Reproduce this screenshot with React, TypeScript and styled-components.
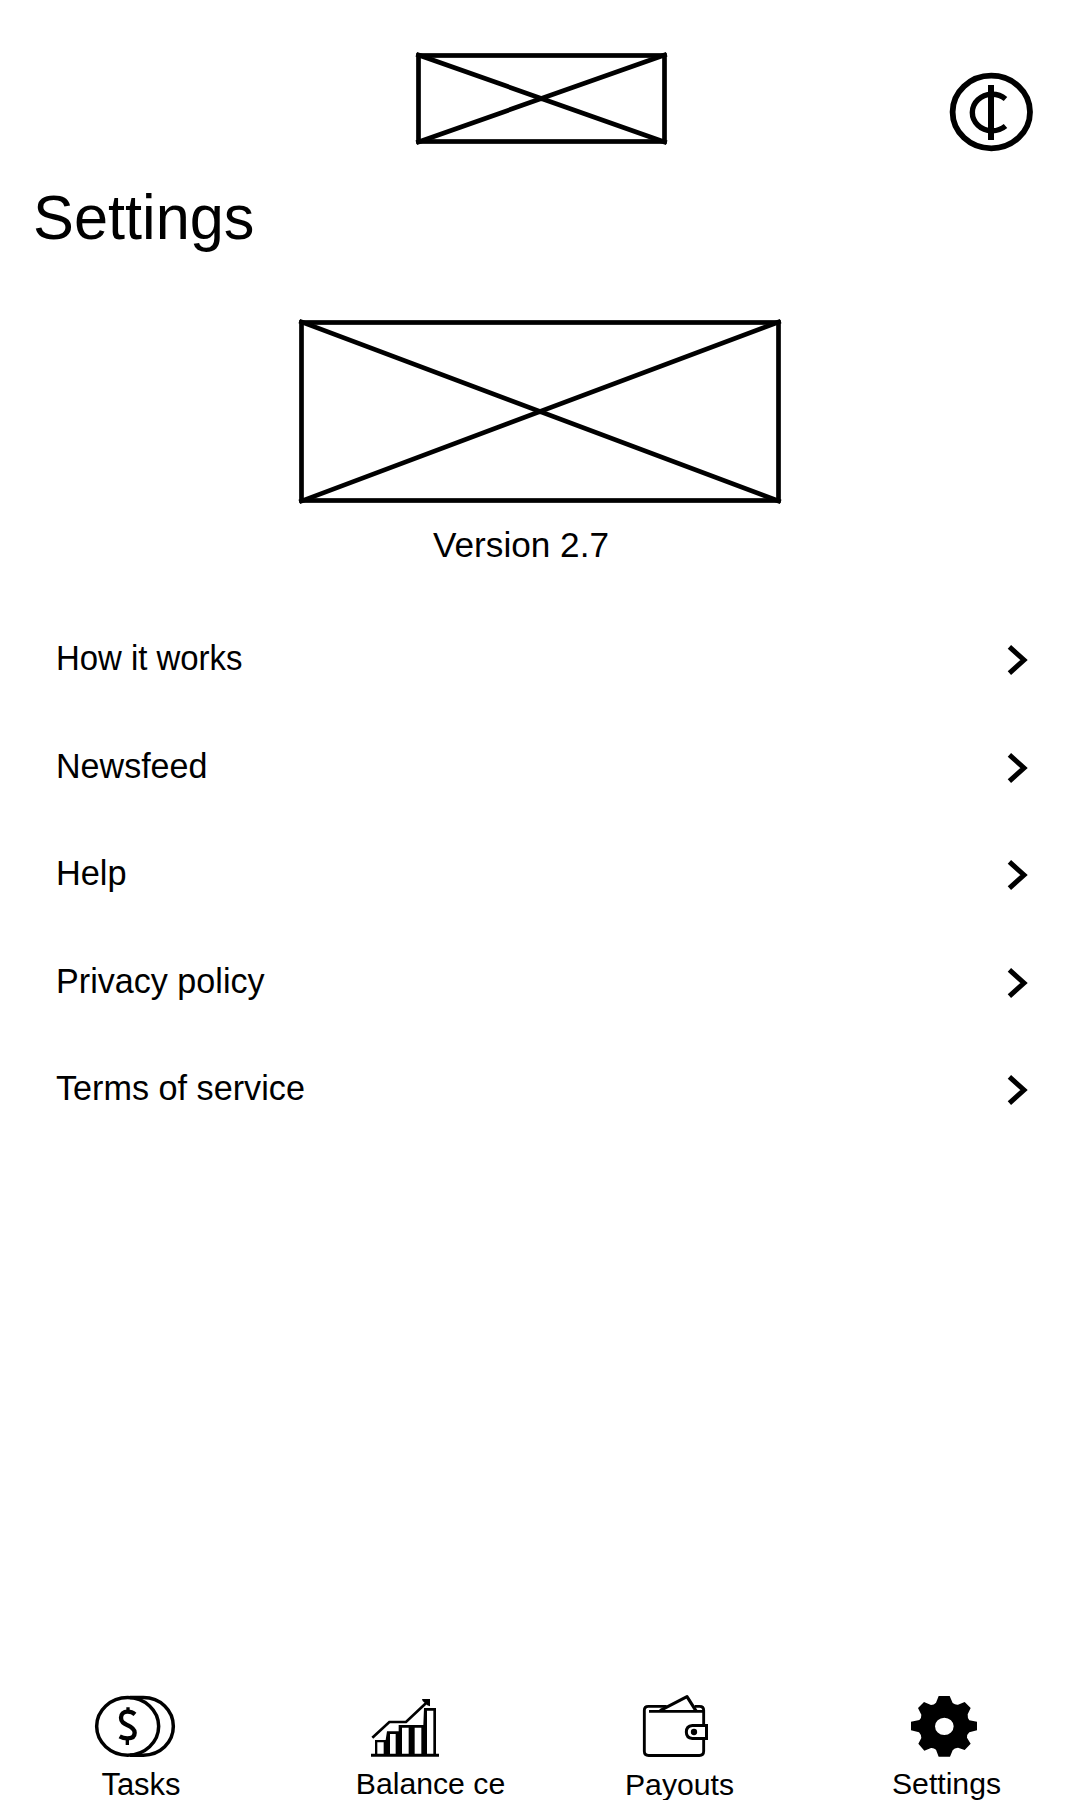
import React from "react";
import styled, { createGlobalStyle } from "styled-components";

const Global = createGlobalStyle`
  html, body { margin: 0; padding: 0; background: #fff; }
  * { box-sizing: border-box; }
`;

const Screen = styled.div`
  display: flex;
  flex-direction: column;
  width: 1080px;
  height: 1800px;
  overflow: hidden;
  background: #fff;
  color: #000;
  font-family: "Liberation Sans", Arial, sans-serif;
`;

const Header = styled.header`
  display: grid;
  grid-template-columns: 1fr 256px 1fr;
  height: 180px;
  padding: 50px 46px 0 48px;
`;

const CoinButton = styled.button`
  grid-column: 3;
  justify-self: end;
  width: 86px;
  height: 80px;
  margin: 22px 0 0;
  padding: 0;
  border: 0;
  background: none;
  color: inherit;
`;

const LogoSlot = styled.div`
  grid-column: 2;
  padding: 3px 0 0 3px;
`;

const Art = styled.svg`
  display: block;
  overflow: visible;
`;

const Condensed = styled.span<{ $scale: number }>`
  display: inline-block;
  white-space: nowrap;
  transform: scaleX(${(p) => p.$scale});
  transform-origin: 0 50%;
`;

const Title = styled.h1`
  margin: 0;
  height: 76px;
  padding-left: 33px;
  font-size: 63px;
  font-weight: 400;
  line-height: 74px;
`;

const About = styled.section`
  display: flex;
  flex-direction: column;
  align-items: center;
  height: 348px;
  padding-top: 64px;
`;

const Version = styled.p`
  margin: 20px 38px 0 0;
  font-size: 35.2px;
  line-height: 44px;
`;

const Menu = styled.ul`
  flex: 1;
  margin: 0;
  padding: 0.5px 53px 0 56px;
  list-style: none;
`;

const MenuRow = styled.li`
  display: flex;
  align-items: center;
  justify-content: space-between;
  height: 107.5px;
  font-size: 35px;
  line-height: 40px;
`;

const Chevron = styled(Art)`
  margin-top: 4px;
`;

const NavBar = styled.nav`
  display: grid;
  grid-template-columns: repeat(4, 270px);
  height: 104px;
`;

const NavItem = styled.div`
  display: flex;
  flex-direction: column;
  align-items: center;
  gap: 9px;
`;

const NavLabel = styled.span<{ $shift: number; $drop: number; $size: number }>`
  padding: ${(p) => p.$drop}px 0 0 ${(p) => p.$shift}px;
  font-size: ${(p) => p.$size}px;
  line-height: 36px;
  white-space: nowrap;
`;

function Placeholder({ width, height }: { width: number; height: number }) {
  const r = width - 2.5;
  const b = height - 2.5;
  return (
    <Art width={width} height={height} fill="none" stroke="#000" strokeWidth="4.7">
      <rect x="2.5" y="2.5" width={r - 2.5} height={b - 2.5} />
      <path d={`M2.5 2 L${r} ${b + 0.5} M${r} 2 L2.5 ${b + 0.5}`} strokeLinecap="square" />
    </Art>
  );
}

function CentCoin() {
  return (
    <Art width="86" height="80" viewBox="0 0 86 80" fill="none" stroke="#000">
      <ellipse cx="43.3" cy="40" rx="38.7" ry="36.3" strokeWidth="5.8" />
      <path d="M57.5 27 A19.8 18.3 0 1 0 57.5 54" strokeWidth="5.4" />
      <path d="M43 13 V68" strokeWidth="6" />
    </Art>
  );
}

// Tab bar icons share a 3-units-per-pixel grid.
function TabIcon({ w, h, box, children }: { w: number; h: number; box: string; children: React.ReactNode }) {
  return (
    <Art width={w} height={h} viewBox={box} fill="none" stroke="#000">
      {children}
    </Art>
  );
}

const CoinsIcon = () => (
  <TabIcon w={80} h={61} box="45 48 240 183">
    <ellipse cx="143" cy="139" rx="93" ry="86.5" strokeWidth="10.5" />
    <path d="M150 52.5 H190 C241 52.5 280 91 280 139 S241 225.5 190 225.5 H150" strokeWidth="10.5" />
    <path d="M165 103 C158 97 151 95 143 95 C130 95 123 103 123 113 C123 126 131 130 143 136 C156 142 164 148 164 158 C164 170 156 175 142 175 C133 175 126 173 119 169" strokeWidth="13" />
    <path d="M144 82 V96 M142 176 V195" strokeWidth="10" />
  </TabIcon>
);

const ChartIcon = () => (
  <TabIcon w={68} h={61} box="93 48 204 183">
    <path d="M93 226 H297" strokeWidth="9" />
    <path
      fill="#000"
      stroke="none"
      fillRule="evenodd"
      d="M105 180 H137 L141 154 H176 V135 H250 L252 84 H288 V228 H105Z M112 187 V222 H131 V187Z M150 162 V222 H167 V162Z M186 143 V222 H206 V143Z M224 143 V222 H244 V143Z M261 92 V222 H280 V92Z"
    />
    <path d="M97 173 L148 126 H198 L264 64" strokeWidth="8" />
    <path d="M246 57 H270 V79 L262 76 L248 63Z" fill="#000" stroke="none" />
  </TabIcon>
);

const WalletIcon = () => (
  <TabIcon w={65} h={61} box="99 48 195 183">
    <path d="M170 79 H115 Q103 79 103 91 V214 Q103 226.5 116 226.5 H268 Q281 226.5 281 214 V176 M281 137 V91 Q281 79 269 79 H254" strokeWidth="8.6" />
    <path d="M117 94 H280" strokeWidth="8.4" />
    <path d="M150 92 L231 50 L259 94" strokeWidth="9.4" strokeLinejoin="round" />
    <path d="M289.5 136.5 H247 Q229 138 229 156 Q229 174 247 175.5 H289.5Z" strokeWidth="9" />
    <circle cx="252" cy="156" r="9.5" fill="#000" stroke="none" />
  </TabIcon>
);

const GearIcon = () => (
  <TabIcon w={68} h={61} box="93 48 204 183">
    <path
      fill="#000"
      stroke="none"
      fillRule="evenodd"
      d="M176 48 H209 L218 69 Q226 75 234 74 L254 66 L272 84 L263 103 Q262 114 268 121 L291 125 V151 L268 157 Q259 165 261 173 L272 191 L254 210 L234 203 Q223 204 218 211 L210 230 H176 L168 209 Q161 203 153 204 L133 212 L115 191 L124 174 Q124 164 117 157 L93 151 V125 L118 120 Q125 113 124 104 L114 84 L132 66 L153 75 Q162 75 168 68Z M193 113 A28 26 0 1 0 193 165 A28 26 0 1 0 193 113Z"
    />
  </TabIcon>
);

const MENU = [
  { label: "How it works", scale: 0.94 },
  { label: "Newsfeed", scale: 0.973 },
  { label: "Help", scale: 0.98 },
  { label: "Privacy policy", scale: 0.975 },
  { label: "Terms of service", scale: 0.977 },
];

const TABS = [
  { label: "Tasks", Icon: CoinsIcon, shift: 12, drop: 1, size: 31 },
  { label: "Balance ce", Icon: ChartIcon, shift: 51, drop: 0, size: 30.2 },
  { label: "Payouts", Icon: WalletIcon, shift: 9, drop: 1, size: 30.2 },
  { label: "Settings", Icon: GearIcon, shift: 3, drop: 0, size: 30.2 },
];

export default function App() {
  return (
    <Screen>
      <Global />
      <Header>
        <LogoSlot>
          <Placeholder width={251} height={91} />
        </LogoSlot>
        <CoinButton aria-label="Coins">
          <CentCoin />
        </CoinButton>
      </Header>
      <Title>
        <Condensed $scale={0.973}>Settings</Condensed>
      </Title>
      <About>
        <Placeholder width={482} height={183} />
        <Version>Version 2.7</Version>
      </About>
      <Menu>
        {MENU.map((m) => (
          <MenuRow key={m.label}>
            <Condensed $scale={m.scale}>{m.label}</Condensed>
            <Chevron width="20" height="32" fill="none" stroke="#000" strokeWidth="5">
              <path d="M2.4 2.8 L17 16 L2.4 29.2" />
            </Chevron>
          </MenuRow>
        ))}
      </Menu>
      <NavBar>
        {TABS.map(({ label, Icon, shift, drop, size }) => (
          <NavItem key={label}>
            <Icon />
            <NavLabel $shift={shift} $drop={drop} $size={size}>{label}</NavLabel>
          </NavItem>
        ))}
      </NavBar>
    </Screen>
  );
}
